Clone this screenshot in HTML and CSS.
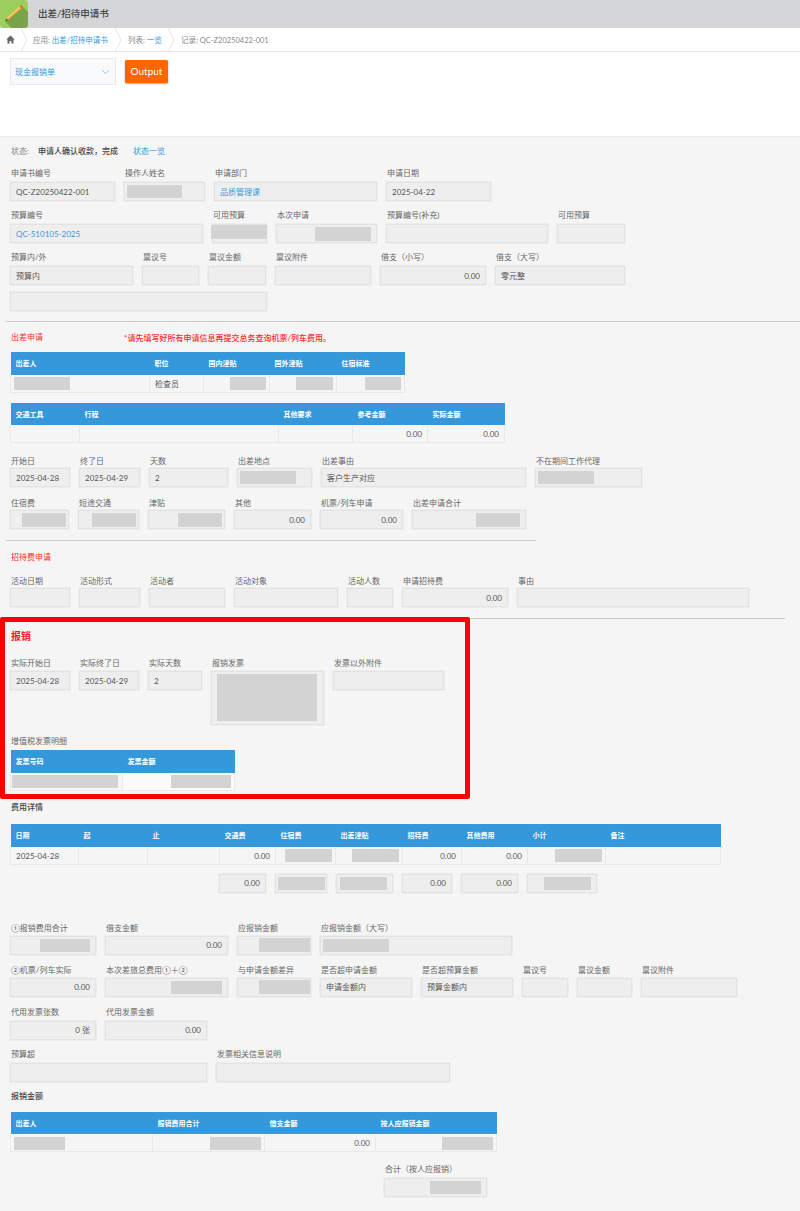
FILE: index.html
```html
<!DOCTYPE html>
<html lang="zh">
<head>
<meta charset="utf-8">
<title>出差/招待申请书</title>
<link rel="stylesheet" href="styles.css">
</head>
<body>
<header class="app-bar">
  <svg class="app-icon" width="28" height="28" viewBox="0 0 28 28">
    <path d="M0 0H24a4 4 0 0 1 4 4V24a4 4 0 0 1-4 4H4a4 4 0 0 1-4-4z" fill="#9ecf5e"/>
    <path d="M5 21.5 21 5 28 12V24a4 4 0 0 1-4 4H11.5z" fill="#7ba34d"/>
    <path d="M19.5 6.5 21.5 8.5 8 20 6.5 18.5z" fill="#f4a638"/>
    <path d="M19.5 6.5 20.5 7.5 7.2 19.2 6.5 18.5z" fill="#fbd27a"/>
    <path d="M19.5 6.5 21 5 23 7 21.5 8.5z" fill="#ef6a5c"/>
    <path d="M6.5 18.5 8 20 5 21.5z" fill="#5d4a34"/>
  </svg>
  <h1 class="app-title">出差/招待申请书</h1>
</header>
<nav class="crumbs">
  <svg class="home" width="9" height="9" viewBox="0 0 9 9"><path d="M4.5 0.6 0.3 4.6H1.5V8.6H3.6V6H5.4V8.6H7.5V4.6H8.7Z" fill="#666"/></svg>
  <svg class="sep sep-home" width="8" height="24" viewBox="0 0 8 24"><path d="M1 0 7 12 1 24" fill="none" stroke="#e4e4e4"/></svg>
  <span class="crumb crumb-app">应用: <a class="link">出差/招待申请书</a></span>
  <svg class="sep" width="8" height="24" viewBox="0 0 8 24"><path d="M1 0 7 12 1 24" fill="none" stroke="#e4e4e4"/></svg>
  <span class="crumb crumb-list">列表: <a class="link">一览</a></span>
  <svg class="sep" width="8" height="24" viewBox="0 0 8 24"><path d="M1 0 7 12 1 24" fill="none" stroke="#e4e4e4"/></svg>
  <span class="crumb crumb-rec">记录: QC-Z20250422-001</span>
</nav>
<section class="toolbar">
  <div class="select">
    <span>现金报销单</span>
    <svg width="9" height="6" viewBox="0 0 9 6"><path d="M1 1 4.5 4.6 8 1" fill="none" stroke="#9cc8e6" stroke-width="1"/></svg>
  </div>
  <button class="output" type="button">Output</button>
</section>

<main class="form">
  <p class="status"><span class="status-key">状态:</span><b class="status-val">申请人确认收款，完成</b><a class="link">状态一览</a></p>

  <div class="row r1">
    <div class="f"><label>申请书编号</label><div class="box">QC-Z20250422-001</div></div>
    <div class="f"><label>操作人姓名</label><div class="box lead"><i class="rd w55"></i></div></div>
    <div class="f"><label>申请部门</label><div class="box link">品质管理课</div></div>
    <div class="f"><label>申请日期</label><div class="box">2025-04-22</div></div>
  </div>
  <div class="row r2">
    <div class="f"><label>预算编号</label><div class="box link">QC-510105-2025</div></div>
    <div class="f"><label>可用预算</label><div class="box overlap"><i class="rd w56 tall"></i></div></div>
    <div class="f"><label>本次申请</label><div class="box num"><i class="rd w56 tall"></i></div></div>
    <div class="f"><label>预算编号(补充)</label><div class="box"></div></div>
    <div class="f"><label>可用预算</label><div class="box"></div></div>
  </div>
  <div class="row r3">
    <div class="f"><label>预算内/外</label><div class="box">预算内</div></div>
    <div class="f"><label>禀议号</label><div class="box"></div></div>
    <div class="f"><label>禀议金额</label><div class="box"></div></div>
    <div class="f"><label>禀议附件</label><div class="box"></div></div>
    <div class="f"><label>借支（小写）</label><div class="box num">0.00</div></div>
    <div class="f"><label>借支（大写）</label><div class="box">零元整</div></div>
  </div>
  <div class="box extra"></div>
  <hr class="rule rule-full">

  <div class="heading-row">
    <h2 class="red">出差申请</h2>
    <p class="notice">*请先填写好所有申请信息再提交总务查询机票/列车费用。</p>
  </div>
  <table class="grid t1">
    <thead><tr><th>出差人</th><th>职位</th><th>国内津贴</th><th>国外津贴</th><th>住宿标准</th></tr></thead>
    <tbody><tr>
      <td><i class="rd w56"></i></td><td>检查员</td>
      <td class="n"><i class="rd w36"></i></td><td class="n"><i class="rd w37"></i></td><td class="n"><i class="rd w36"></i></td>
    </tr></tbody>
  </table>
  <table class="grid t2">
    <thead><tr><th>交通工具</th><th>行程</th><th>其他要求</th><th>参考金额</th><th>实际金额</th></tr></thead>
    <tbody><tr><td></td><td></td><td></td><td class="n">0.00</td><td class="n">0.00</td></tr></tbody>
  </table>
  <div class="row r5">
    <div class="f"><label>开始日</label><div class="box">2025-04-28</div></div>
    <div class="f"><label>终了日</label><div class="box">2025-04-29</div></div>
    <div class="f"><label>天数</label><div class="box">2</div></div>
    <div class="f"><label>出差地点</label><div class="box lead"><i class="rd w56"></i></div></div>
    <div class="f"><label>出差事由</label><div class="box">客户生产对应</div></div>
    <div class="f"><label>不在期间工作代理</label><div class="box lead"><i class="rd w56"></i></div></div>
  </div>
  <div class="row r6">
    <div class="f"><label>住宿费</label><div class="box num"><i class="rd w44 tall"></i></div></div>
    <div class="f"><label>短途交通</label><div class="box num"><i class="rd w44 tall"></i></div></div>
    <div class="f"><label>津贴</label><div class="box num"><i class="rd w44 tall"></i></div></div>
    <div class="f"><label>其他</label><div class="box num">0.00</div></div>
    <div class="f"><label>机票/列车申请</label><div class="box num">0.00</div></div>
    <div class="f"><label>出差申请合计</label><div class="box num"><i class="rd w44 tall"></i></div></div>
  </div>
  <hr class="rule rule-short">
  <h2 class="red ent-title">招待费申请</h2>
  <div class="row r7">
    <div class="f"><label>活动日期</label><div class="box"></div></div>
    <div class="f"><label>活动形式</label><div class="box"></div></div>
    <div class="f"><label>活动者</label><div class="box"></div></div>
    <div class="f"><label>活动对象</label><div class="box"></div></div>
    <div class="f"><label>活动人数</label><div class="box"></div></div>
    <div class="f"><label>申请招待费</label><div class="box num">0.00</div></div>
    <div class="f"><label>事由</label><div class="box"></div></div>
  </div>

  <div class="claim-wrap">
    <section class="claim">
      <h2 class="claim-title">报销</h2>
      <div class="row r8">
        <div class="f"><label>实际开始日</label><div class="box">2025-04-28</div></div>
        <div class="f"><label>实际终了日</label><div class="box">2025-04-29</div></div>
        <div class="f"><label>实际天数</label><div class="box">2</div></div>
        <div class="f"><label>报销发票</label><div class="box invoice"><i class="rd invoice-rd"></i></div></div>
        <div class="f"><label>发票以外附件</label><div class="box"></div></div>
      </div>
      <label class="tax-label">增值税发票明细</label>
      <table class="grid t-tax">
        <thead><tr><th>发票号码</th><th>发票金额</th></tr></thead>
        <tbody><tr><td class="tight"><i class="rd w106"></i></td><td class="n light"><i class="rd w60"></i></td></tr></tbody>
      </table>
    </section>
    <hr class="rule rule-side">
  </div>

  <h3 class="sub detail-title">费用详情</h3>
  <table class="grid t3">
    <thead><tr><th>日期</th><th>起</th><th>止</th><th>交通费</th><th>住宿费</th><th>出差津贴</th><th>招待费</th><th>其他费用</th><th>小计</th><th>备注</th></tr></thead>
    <tbody><tr>
      <td>2025-04-28</td><td></td><td></td><td class="n">0.00</td>
      <td class="n"><i class="rd w47"></i></td><td class="n"><i class="rd w47"></i></td>
      <td class="n">0.00</td><td class="n">0.00</td><td class="n"><i class="rd w47"></i></td><td></td>
    </tr></tbody>
  </table>
  <div class="totals">
    <div class="box num">0.00</div>
    <div class="box lead"><i class="rd w47"></i></div>
    <div class="box num"><i class="rd w47"></i></div>
    <div class="box num">0.00</div>
    <div class="box num">0.00</div>
    <div class="box num"><i class="rd w47"></i></div>
  </div>

  <div class="row r9">
    <div class="f"><label>①报销费用合计</label><div class="box num"><i class="rd w50"></i></div></div>
    <div class="f"><label>借支金额</label><div class="box num">0.00</div></div>
    <div class="f"><label>应报销金额</label><div class="box num flush"><i class="rd w51 tall"></i></div></div>
    <div class="f"><label>应报销金额（大写）</label><div class="box lead wide"><i class="rd w66"></i></div></div>
  </div>
  <div class="row r10">
    <div class="f"><label>②机票/列车实际</label><div class="box num">0.00</div></div>
    <div class="f"><label>本次差旅总费用①＋②</label><div class="box num"><i class="rd w51"></i></div></div>
    <div class="f"><label>与申请金额差异</label><div class="box num flush"><i class="rd w51 tall"></i></div></div>
    <div class="f"><label>是否超申请金额</label><div class="box">申请金额内</div></div>
    <div class="f"><label>是否超预算金额</label><div class="box">预算金额内</div></div>
    <div class="f"><label>禀议号</label><div class="box"></div></div>
    <div class="f"><label>禀议金额</label><div class="box"></div></div>
    <div class="f"><label>禀议附件</label><div class="box"></div></div>
  </div>
  <div class="row r11">
    <div class="f"><label>代用发票张数</label><div class="box num">0 张</div></div>
    <div class="f"><label>代用发票金额</label><div class="box num">0.00</div></div>
  </div>
  <div class="row r12">
    <div class="f"><label>预算超</label><div class="box"></div></div>
    <div class="f"><label>发票相关信息说明</label><div class="box"></div></div>
  </div>

  <h3 class="sub amount-title">报销金额</h3>
  <table class="grid t4">
    <thead><tr><th>出差人</th><th>报销费用合计</th><th>借支金额</th><th>按人应报销金额</th></tr></thead>
    <tbody><tr>
      <td><i class="rd w51"></i></td><td class="n"><i class="rd w51"></i></td><td class="n">0.00</td><td class="n"><i class="rd w51"></i></td>
    </tr></tbody>
  </table>
  <div class="f grand"><label>合计（按人应报销）</label><div class="box num"><i class="rd w51"></i></div></div>
</main>
</body>
</html>
```
FILE: styles.css
```css
* { box-sizing: border-box; }
html, body { margin: 0; padding: 0; }
body {
  width: 800px;
  height: 1211px;
  overflow: hidden;
  background: #f5f5f5;
  font-family: Lato, "Noto Sans CJK SC", sans-serif;
  font-size: 8px;
  color: #666;
}
.link { color: #3498db; }

/* app bar */
.app-bar { height: 28px; background: #d3d5d7; display: flex; align-items: center; }
.app-icon { flex: none; }
.app-title { margin: 0 0 0 10px; font-size: 9.5px; font-weight: 500; color: #444; line-height: 28px; }

/* breadcrumbs */
.crumbs {
  height: 24px;
  background: #fff;
  border-bottom: 1px solid #e8e8e8;
  display: flex;
  align-items: center;
  color: #888;
  font-size: 7.5px;
}
.home { margin-left: 6px; flex: none; }
.sep { flex: none; align-self: flex-start; }
.sep-home { margin-left: 5px; }
.crumb { white-space: nowrap; }
.crumb-app { margin-left: 5px; width: 81px; }
.crumb-list { margin-left: 6px; width: 39px; }
.crumb-rec { margin-left: 6px; }

/* toolbar */
.toolbar { height: 84px; background: #fff; padding: 6px 10px; display: flex; align-items: flex-start; gap: 9px; }
.select {
  width: 106px;
  height: 27px;
  background: #f7f9fa;
  border: 1px solid #e6eaec;
  color: #3498db;
  display: flex;
  align-items: center;
  justify-content: space-between;
  padding: 0 5px 0 4px;
}
.output {
  margin-top: 2px;
  width: 43px;
  height: 23px;
  padding: 0 0 2px;
  border: 0;
  border-radius: 1.5px;
  background: #ff6600;
  box-shadow: 0 1px 2px rgba(0, 0, 0, .35);
  color: #fff;
  font: 10px Lato, sans-serif;
}

/* form */
.form { border-top: 1px solid #ececec; padding: 8px 0 0 10px; }
.status { margin: 0; height: 12px; line-height: 12px; display: flex; }
.status-key { width: 27px; margin-left: 1px; color: #888; }
.status-val { width: 95px; font-weight: 500; color: #444; }

.row { display: grid; margin-top: 8px; }
.f { padding-right: 9px; min-width: 0; }
label { display: block; height: 12px; line-height: 12px; margin: 0 0 3px 1px; color: #666; white-space: nowrap; }
.box {
  height: 19px;
  background: #eee;
  border: 1px solid #e3e3e3;
  box-shadow: 0 0 0 .5px #e6e6e6;
  padding: 0 5px;
  line-height: 16px;
  color: #555;
  display: flex;
  align-items: center;
  white-space: nowrap;
}
.box.link { color: #3498db; }
.box.num { justify-content: flex-end; padding-right: 5px; }
.box.lead { padding: 0 2px; }
.box.flush { padding-right: 0; }

.rd { display: block; flex: none; height: 13px; background: #d3d3d3; }
.rd.tall { height: 14px; }
.w36 { width: 36px; } .w37 { width: 37px; } .w44 { width: 44px; } .w47 { width: 47px; }
.w50 { width: 50px; } .w51 { width: 51px; } .w55 { width: 55px; } .w56 { width: 56px; }
.w60 { width: 60px; } .w66 { width: 66px; } .w106 { width: 106px; }

.overlap { padding: 0; align-items: flex-start; }
.overlap .rd { margin-left: -2px; }

.r1 { margin-top: 10px; grid-template-columns: 114px 90px 172px 114px; }
.r2 { grid-template-columns: 202px 64px 110px 171px 77px; }
.r3 { grid-template-columns: 132px 66px 67px 105px 115px 139px; }
.extra { width: 257px; margin-top: 7px; }
.rule { border: 0; border-top: 1px solid #ccc; margin: 0; }
.rule-full { margin: 10px 0 0 -4px; }
.rule-short { width: 530px; margin: 11px 0 0 -4px; }
.rule-side { flex: 1; margin: 1px 15px 0 0; }

h2, h3 { margin: 0; font-size: 8px; line-height: 12px; }
.red { color: #ff2a2a; font-weight: 400; }
.heading-row { margin-top: 9px; display: flex; align-items: center; height: 12px; padding-left: 1px; }
.heading-row .red { width: 113px; }
.notice { margin: 0; color: #ff2a2a; font-weight: 500; white-space: nowrap; }
.ent-title { margin: 10px 0 0 1px; }

/* tables */
.grid { border-collapse: collapse; table-layout: fixed; margin: 0; font-size: 8px; }
.grid th {
  height: 23px;
  background: #3498db;
  color: #fff;
  font-size: 7px;
  font-weight: 700;
  text-align: left;
  padding: 0 5px;
  border-bottom: 1px solid #f8f8f8;
  white-space: nowrap;
}
.grid td {
  height: 17px;
  padding: 0 5px;
  border: 1px solid #e9e9e9;
  border-top: 0;
  color: #555;
  white-space: nowrap;
}
.grid td.n { text-align: right; }
.grid td .rd { margin: 0 -2px; }
.grid td.n .rd { margin-left: auto; margin-right: -2px; }
.grid td.tight { padding: 0 3px; }
.grid td.light { background: #fbfbfb; }

.t1 { width: 394px; margin-top: 9px; }
.t1 th:nth-child(1) { width: 139px; } .t1 th:nth-child(2) { width: 54px; }
.t1 th:nth-child(3) { width: 66px; } .t1 th:nth-child(4) { width: 67px; } .t1 th:nth-child(5) { width: 68px; }
.t2 { width: 494px; margin-top: 10px; }
.t2 th:nth-child(1) { width: 69px; } .t2 th:nth-child(2) { width: 199px; }
.t2 th:nth-child(3) { width: 74px; } .t2 th:nth-child(4) { width: 75px; } .t2 th:nth-child(5) { width: 77px; }
.t-tax { width: 225px; margin-top: 3px; }
.t-tax th:nth-child(1) { width: 112px; }
.t3 { width: 711px; margin-top: 11px; }
.t3 th:nth-child(1) { width: 68px; } .t3 th:nth-child(2) { width: 69px; } .t3 th:nth-child(3) { width: 72px; }
.t3 th:nth-child(4) { width: 56px; } .t3 th:nth-child(5) { width: 60px; } .t3 th:nth-child(6) { width: 67px; }
.t3 th:nth-child(7) { width: 59px; } .t3 th:nth-child(8) { width: 66px; } .t3 th:nth-child(9) { width: 78px; }
.t4 { width: 487px; margin-top: 10px; }
.t4 th:nth-child(1) { width: 142px; } .t4 th:nth-child(2) { width: 112px; } .t4 th:nth-child(3) { width: 111px; }

.r5 { margin-top: 10px; grid-template-columns: 69px 70px 88px 84px 214px 116px; }
.r6 { grid-template-columns: 68px 70px 86px 86px 92px 123px; }
.r6 .f:nth-child(-n+3) .box { padding-right: 2px; }
.r7 { margin-top: 10px; grid-template-columns: 69px 70px 85px 113px 55px 115px 241px; }
.r5 label, .r6 label, .r7 label { margin-top: 2px; margin-bottom: 1px; }
.r8 label, .r9 label, .r10 label { margin-top: 1px; margin-bottom: 2px; }

/* red-framed claim block */
.claim-wrap { display: flex; align-items: flex-start; margin: 10px 0 0 -10px; }
.claim {
  width: 470px;
  height: 182px;
  flex: none;
  border: 5px solid #f00;
  border-radius: 2px;
  padding: 7px 0 0 5px;
}
.claim-title { font-size: 10px; font-weight: 700; line-height: 14px; color: #ff1a1a; margin-left: 1px; }
.r8 { margin-top: 13px; height: 69px; grid-template-columns: 69px 69px 63px 122px 120px; align-items: start; }
.invoice { height: 54px; padding: 2px 5px 5px; align-items: flex-start; }
.invoice-rd { width: 100px; height: 47px; }
.tax-label { margin: 10px 0 0 1px; }

.sub { color: #444; font-weight: 500; margin-left: 1px; }
.detail-title { margin-top: 2px; }
.totals { display: grid; margin: 9px 0 0 209px; grid-template-columns: 47px 52px 57px 50px 57px 70px; column-gap: 9px; }

.r9 { margin-top: 28px; grid-template-columns: 95px 132px 83px 201px; }
.r10 { grid-template-columns: 95px 132px 83px 101px 101px 55px 64px 105px; }
.r11 { margin-top: 9px; grid-template-columns: 95px 111px; }
.r12 { grid-template-columns: 206px 243px; }
.amount-title { margin-top: 8px; }
.grand { width: 112px; margin: 11px 0 0 374px; }
```
